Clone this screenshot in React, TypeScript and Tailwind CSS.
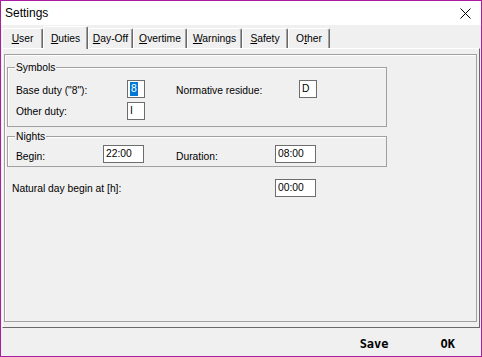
import React from "react";

const tabs = [
  { pre: "", key: "U", post: "ser", w: "w-[41px]" },
  { pre: "", key: "D", post: "uties", w: "w-[45px]", active: true },
  { pre: "", key: "D", post: "ay-Off", w: "w-[45px]" },
  { pre: "", key: "O", post: "vertime", w: "w-[54px]" },
  { pre: "", key: "W", post: "arnings", w: "w-[55px]" },
  { pre: "", key: "S", post: "afety", w: "w-[46px]" },
  { pre: "O", key: "t", post: "her", w: "w-[42px]" },
];

const Field: React.FC<{ value: string; className: string; selected?: boolean }> = ({ value, className, selected }) => (
  <div className={`flex h-[18px] items-center border border-[#6d6d6d] bg-white pl-[2px] leading-[14px] ${className}`}>
    {selected ? <span className="bg-[#0078d7] px-px text-white">{value}</span> : value}
  </div>
);

const App: React.FC = () => {
  return (
    <div className="flex h-[357px] w-[482px] flex-col border border-[#aa1ea0] bg-[#f0f0f0] font-['Liberation_Sans',Arial,sans-serif] text-[10.3px] text-black">
      {/* title bar */}
      <div className="flex h-[24px] shrink-0 items-center justify-between bg-white pl-[4px] pr-[10px]">
        <span className="text-[12px]">Settings</span>
        <svg width="11" height="11" viewBox="0 0 11 11" className="text-black">
          <path d="M0.5 0.5 L10.5 10.5 M10.5 0.5 L0.5 10.5" stroke="currentColor" strokeWidth="1" fill="none" />
        </svg>
      </div>

      {/* tab strip */}
      <div className="ml-px flex h-[23px] shrink-0 items-end">
        {tabs.map((t) => (
          <div
            key={t.key + t.post}
            className={`flex items-center justify-center rounded-t-[2px] border-t border-l border-r border-t-white border-l-white border-r-[#696969] bg-[#f0f0f0] pt-px shadow-[inset_-1px_0_0_#a0a0a0] ${t.w} ${
              t.active ? "relative z-10 -mb-px h-[23px]" : "h-[20px]"
            }`}
          >
            <span>
              {t.pre}
              <u className="underline-offset-[1px]">{t.key}</u>
              {t.post}
            </span>
          </div>
        ))}
      </div>

      {/* tab page */}
      <div className="mx-px flex h-[280px] shrink-0 flex-col border border-t-white border-l-white border-r-[#696969] border-b-[#696969]">
        <div className="mt-[5px] mr-[2px] mb-[5px] ml-px flex flex-1 flex-col border border-[#a0a0a0] shadow-[inset_1px_1px_0_#fff]">
          <fieldset className="mt-[6px] ml-[2px] w-[380px] border border-[#a0a0a0] pr-0 pb-[6px] pl-[8px] shadow-[inset_1px_1px_0_#fff]">
            <legend className="-ml-px bg-[#f0f0f0] px-px leading-[13px]">Symbols</legend>
            <div className="mt-[6px] flex h-[18px] items-center">
              <span className="w-[111px] pt-[4px]">Base duty ("8"):</span>
              <Field value="8" selected className="w-[18px]" />
              <span className="ml-[31px] w-[123px] pt-[4px]">Normative residue:</span>
              <Field value="D" className="w-[18px]" />
            </div>
            <div className="mt-[4px] flex h-[18px] items-center">
              <span className="w-[111px] pt-[2px]">Other duty:</span>
              <Field value="I" className="w-[18px]" />
            </div>
          </fieldset>

          <fieldset className="mt-[3px] ml-[2px] w-[380px] border border-[#a0a0a0] pb-[3px] pl-[8px] shadow-[inset_1px_1px_0_#fff]">
            <legend className="-ml-px bg-[#f0f0f0] px-px leading-[13px]">Nights</legend>
            <div className="mt-[2px] flex h-[18px] items-center">
              <span className="w-[87px] pt-[5px]">Begin:</span>
              <Field value="22:00" className="w-[41px]" />
              <span className="ml-[32px] w-[99px] pt-[5px]">Duration:</span>
              <Field value="08:00" className="w-[41px]" />
            </div>
          </fieldset>

          <div className="mt-[12px] ml-[7px] flex h-[18px] items-center">
            <span className="w-[263px] pt-[2px]">Natural day begin at [h]:</span>
            <Field value="00:00" className="w-[41px]" />
          </div>
        </div>
      </div>

      {/* button bar */}
      <div className="flex flex-1 items-center justify-end gap-[52px] pt-[3px] pr-[26px] font-['DejaVu_Sans_Mono',monospace] text-[12px] font-bold">
        <span>Save</span>
        <span>OK</span>
      </div>
    </div>
  );
};

export default App;
